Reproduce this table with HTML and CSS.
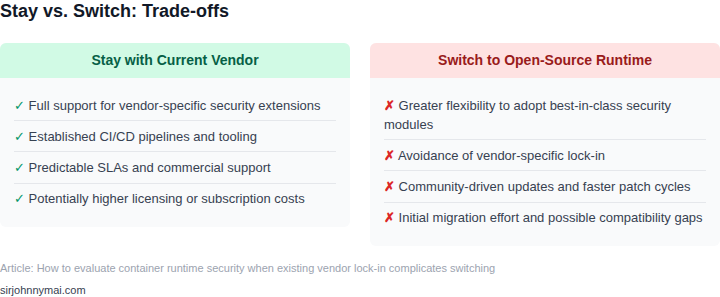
FILE: index.html
```html
<!DOCTYPE html>
<html>
<head>
<meta charset="utf-8">
<link rel="stylesheet" href="styles.css">
</head>
<body>
<h1 class="title">Stay vs. Switch: Trade-offs</h1>
<div class="compare">
  <div class="card">
    <div class="card-head stay">Stay with Current Vendor</div>
    <ul class="items">
      <li><span class="mark ok">✓</span> Full support for vendor-specific security extensions</li>
      <li><span class="mark ok">✓</span> Established CI/CD pipelines and tooling</li>
      <li><span class="mark ok">✓</span> Predictable SLAs and commercial support</li>
      <li><span class="mark ok">✓</span> Potentially higher licensing or subscription costs</li>
    </ul>
  </div>
  <div class="card">
    <div class="card-head switch">Switch to Open-Source Runtime</div>
    <ul class="items">
      <li><span class="mark no">✗</span> Greater flexibility to adopt best-in-class security modules</li>
      <li><span class="mark no">✗</span> Avoidance of vendor-specific lock-in</li>
      <li><span class="mark no">✗</span> Community-driven updates and faster patch cycles</li>
      <li><span class="mark no">✗</span> Initial migration effort and possible compatibility gaps</li>
    </ul>
  </div>
</div>
<p class="article">Article: How to evaluate container runtime security when existing vendor lock-in complicates switching</p>
<p class="site">sirjohnnymai.com</p>
</body>
</html>
```
FILE: styles.css
```css
html, body {
  margin: 0;
  padding: 0;
  background: #ffffff;
}
body {
  font-family: "Liberation Sans", Arial, sans-serif;
  color: #374151;
}
.title {
  margin: 0 0 21px 0;
  font-size: 18px;
  line-height: 22px;
  font-weight: 700;
  color: #111827;
}
.compare {
  display: grid;
  grid-template-columns: 1fr 1fr;
  gap: 20px;
  align-items: start;
}
.card {
  background: #f9fafb;
  border-radius: 6px;
  overflow: hidden;
}
.card-head {
  padding: 9px 10px;
  text-align: center;
  font-size: 14px;
  line-height: 17px;
  font-weight: 700;
}
.card-head.stay {
  background: #d1fae5;
  color: #065f46;
}
.card-head.switch {
  background: #fee2e2;
  color: #991b1b;
}
.items {
  list-style: none;
  margin: 0;
  padding: 12px 14px 13px 14px;
}
.items li {
  font-size: 13px;
  line-height: 19px;
  padding: 5.6px 0;
  border-bottom: 1px solid #e5e7eb;
}
.items li:last-child {
  border-bottom: none;
}
.mark.ok { color: #059669; }
.mark.no { color: #dc2626; font-weight: 700; }
.article {
  margin: 14px 0 0 0;
  font-size: 11px;
  line-height: 16px;
  color: #9ca3af;
}
.site {
  margin: 8px 0 0 0;
  font-size: 11px;
  line-height: 12px;
  color: #374151;
}
```
